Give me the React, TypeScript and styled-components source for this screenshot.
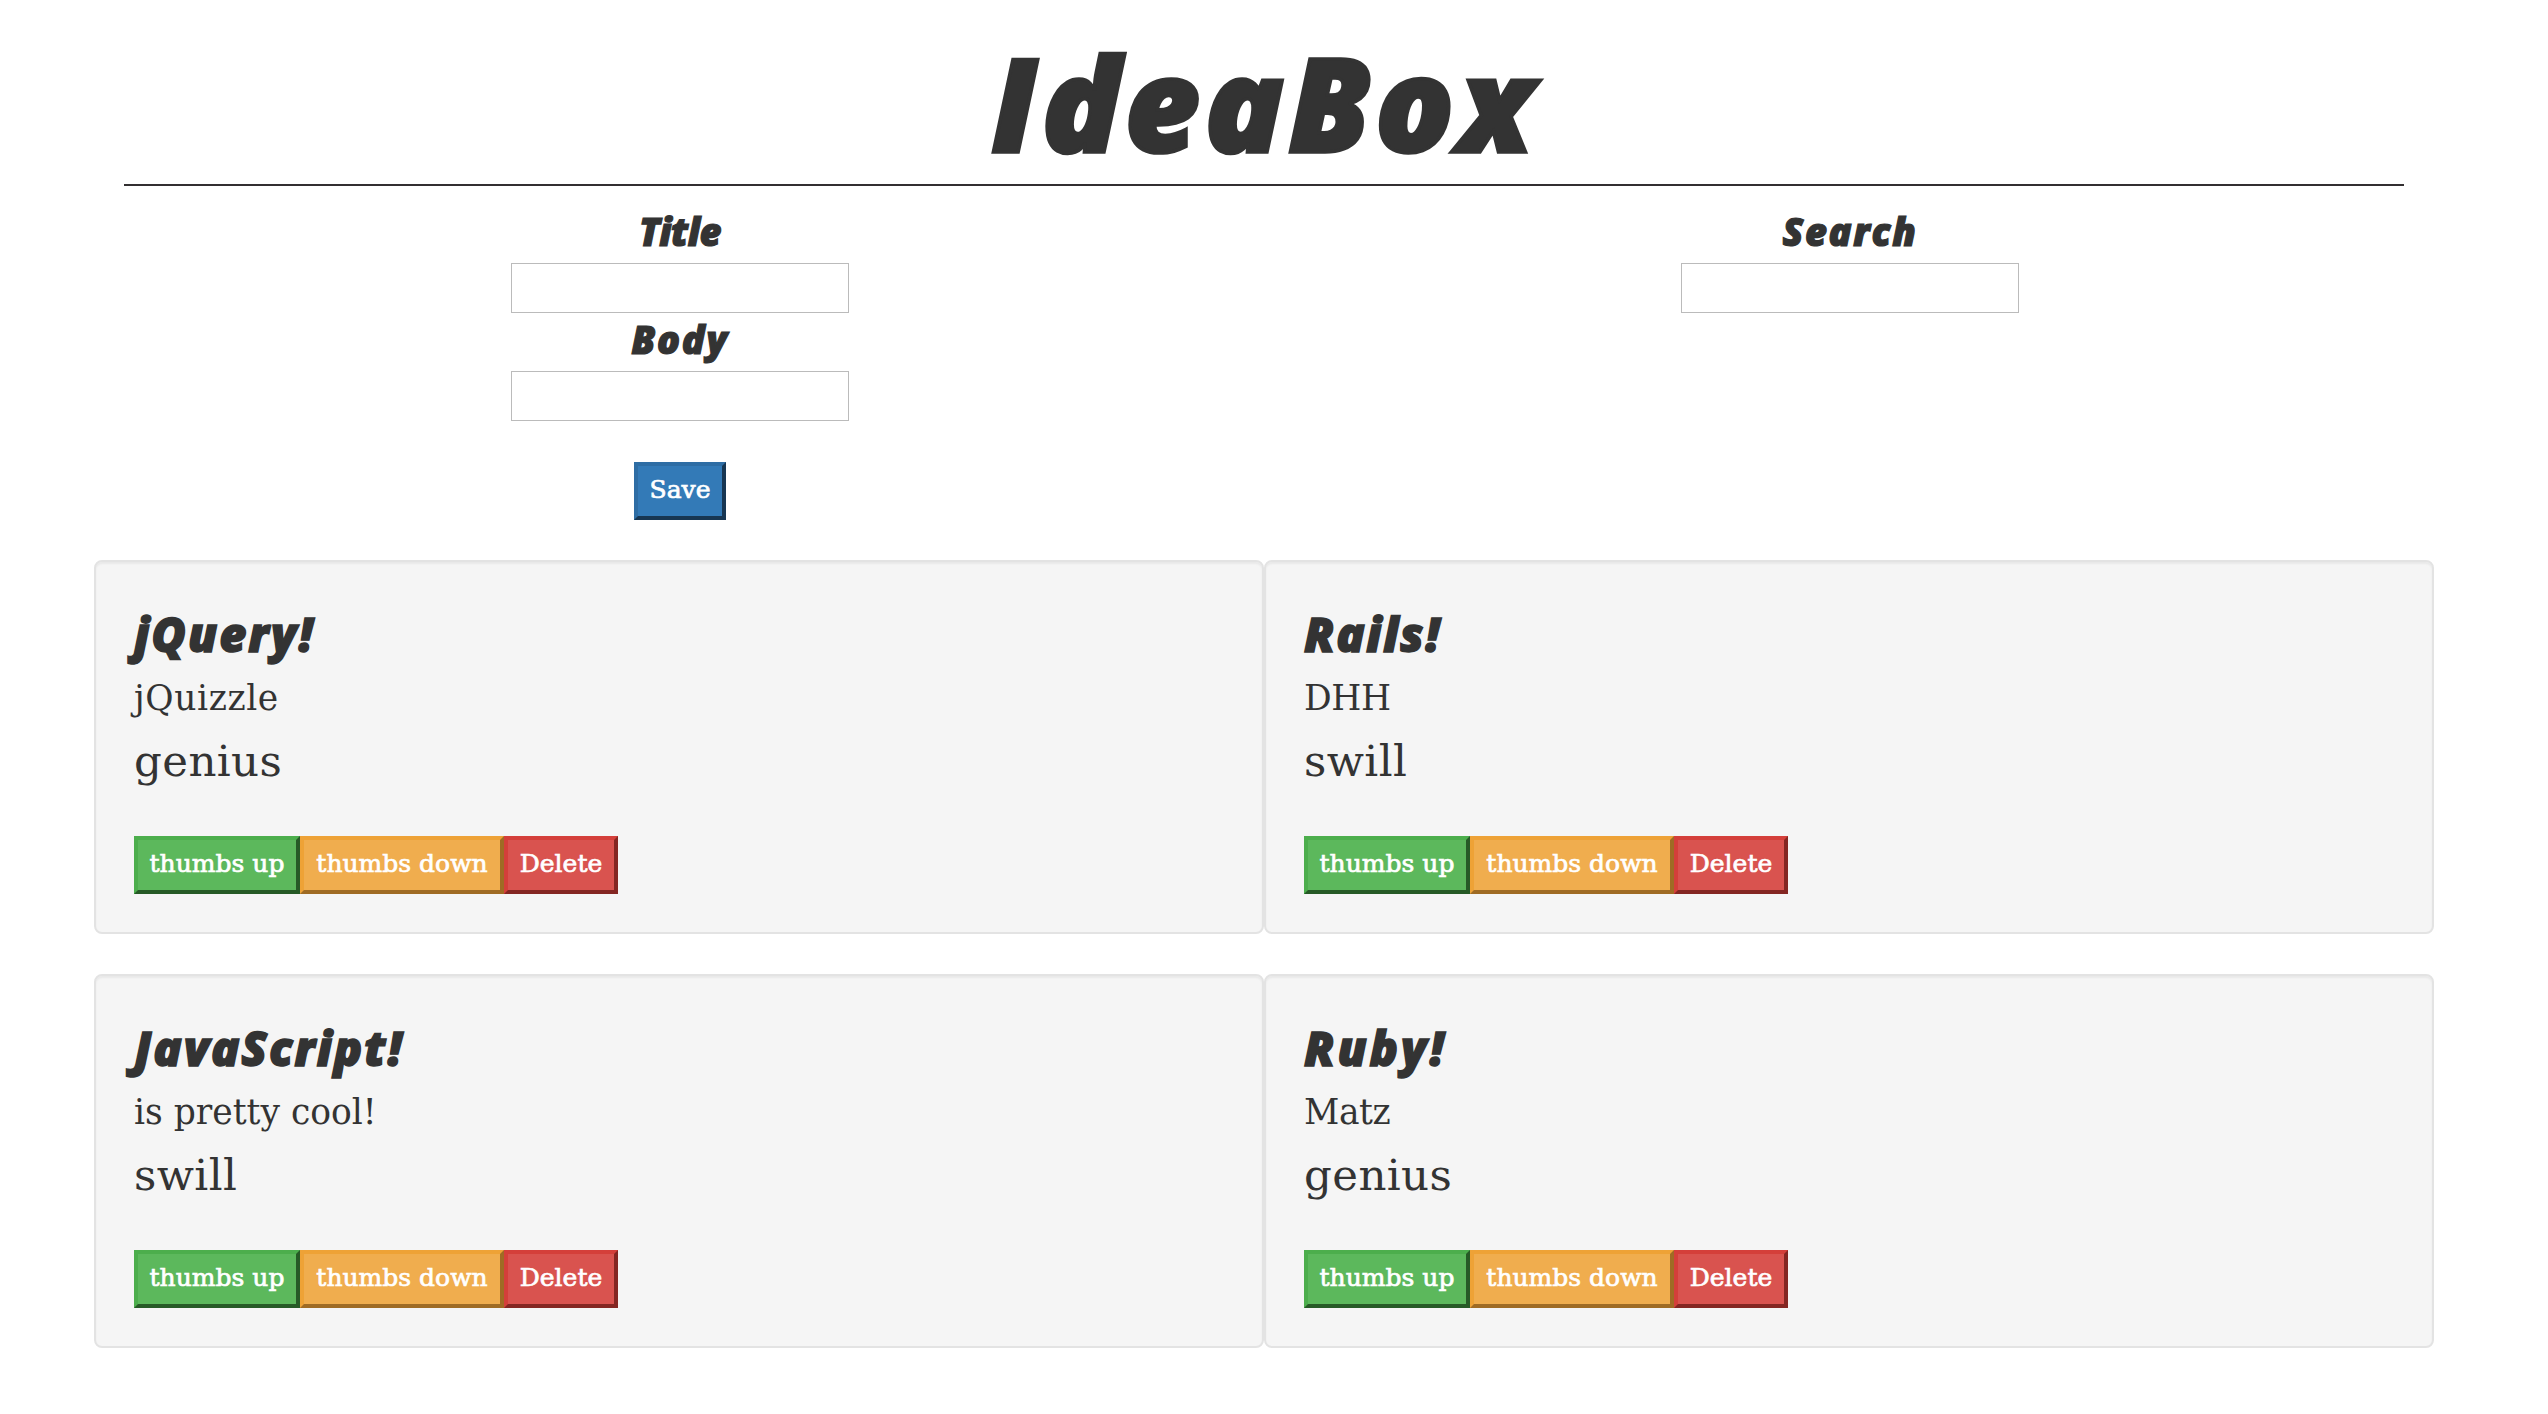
import React from 'react';
import styled, { createGlobalStyle } from 'styled-components';

const Global = createGlobalStyle`
  *, *::before, *::after { box-sizing: border-box; }
  body { margin: 0; background: #fff; color: #333; font-family: "DejaVu Serif", "Liberation Serif", serif; }
  h1, h2, h3, p { margin: 0; font-weight: 400; }
`;

const displayFont = `
  font-family: "Open Sans", "Noto Sans", sans-serif;
  font-style: italic;
  font-weight: 800;
  white-space: nowrap;
`;

const Page = styled.main`
  width: 2340px;
  margin-left: 94px;
`;

const Header = styled.header`
  margin: 0 30px;
  padding: 37px 0 17px;
  text-align: center;
  border-bottom: 2px solid #322f31;
`;

const Brand = styled.h1`
  ${displayFont}
  font-size: 130px;
  line-height: 130px;
  letter-spacing: 4.6px;
  -webkit-text-stroke: 3.5px #333;
`;

const Forms = styled.section`
  display: grid;
  grid-template-columns: 1fr 1fr;
  margin: 0 -1px 0 1px;
  padding: 25px 0 40px;
`;

const Column = styled.div`
  display: flex;
  flex-direction: column;
  align-items: center;
  gap: 6px;
`;

const Field = styled.label`
  display: flex;
  flex-direction: column;
  align-items: center;
  gap: 12px;
`;

const FieldName = styled.span<{ $spacing: number }>`
  ${displayFont}
  font-size: 38px;
  line-height: 40px;
  letter-spacing: ${p => p.$spacing}px;
  -webkit-text-stroke: 1.2px #333;
`;

const Input = styled.input`
  width: 338px;
  height: 50px;
  padding: 0 12px;
  border: 1px solid #bbb;
  border-radius: 0;
  background: #fff;
  font: inherit;
  font-size: 25px;
  outline: none;
`;

/* face, lit edge, shaded edge */
const tones = {
  primary: ['#337ab7', '#2e6da4', '#173652'],
  success: ['#5cb85c', '#4cae4c', '#265a26'],
  warning: ['#f0ad4e', '#eea236', '#9f6b24'],
  danger: ['#d9534f', '#d43f3a', '#842622'],
};
type Tone = keyof typeof tones;

const Button = styled.button<{ $tone: Tone; $width: number }>`
  width: ${p => p.$width}px;
  height: 58px;
  padding: 0 0 2px;
  border: 4px solid;
  border-color: ${p => {
    const [, lit, shaded] = tones[p.$tone];
    return `${lit} ${shaded} ${shaded} ${lit}`;
  }};
  border-radius: 0;
  background: ${p => tones[p.$tone][0]};
  color: #fff;
  font: 25px/48px "DejaVu Serif", "Liberation Serif", serif;
  white-space: nowrap;
  -webkit-text-stroke: 0.7px #fff;
`;

const SaveButton = styled(Button)`
  margin-top: 35px;
`;

const Grid = styled.section`
  display: grid;
  grid-template-columns: 1fr 1fr;
  row-gap: 40px;
`;

const Card = styled.article`
  padding: 47px 38px 38px;
  border: 2px solid #e3e3e3;
  border-radius: 8px;
  background: #f5f5f5;
  box-shadow: inset 0 2px 2px rgba(0, 0, 0, 0.05);
`;

const CardTitle = styled.h2<{ $spacing: number }>`
  ${displayFont}
  font-size: 47px;
  line-height: 50px;
  letter-spacing: ${p => p.$spacing}px;
  -webkit-text-stroke: 1.4px #333;
`;

const CardBody = styled.p<{ $spacing: number }>`
  margin-top: 19px;
  font-size: 34.5px;
  line-height: 40px;
  letter-spacing: ${p => p.$spacing}px;
`;

const Quality = styled.h3`
  margin-top: 18px;
  font-size: 43.5px;
  line-height: 50px;
  letter-spacing: 0.4px;
`;

const Actions = styled.div`
  display: flex;
  margin-top: 50px;
`;

const ideas = [
  { title: 'jQuery!', body: 'jQuizzle', quality: 'genius', titleSpacing: 2, bodySpacing: 0.6 },
  { title: 'Rails!', body: 'DHH', quality: 'swill', titleSpacing: 1.6, bodySpacing: -0.4 },
  { title: 'JavaScript!', body: 'is pretty cool!', quality: 'swill', titleSpacing: 1.8, bodySpacing: 0 },
  { title: 'Ruby!', body: 'Matz', quality: 'genius', titleSpacing: 2.9, bodySpacing: -0.4 },
];

export default function App() {
  return (
    <>
      <Global />
      <Page>
        <Header>
          <Brand>IdeaBox</Brand>
        </Header>
        <Forms>
          <Column>
            <Field>
              <FieldName $spacing={-0.6}>Title</FieldName>
              <Input />
            </Field>
            <Field>
              <FieldName $spacing={1.7}>Body</FieldName>
              <Input />
            </Field>
            <SaveButton $tone="primary" $width={92}>Save</SaveButton>
          </Column>
          <Column>
            <Field>
              <FieldName $spacing={1.6}>Search</FieldName>
              <Input />
            </Field>
          </Column>
        </Forms>
        <Grid>
          {ideas.map(idea => (
            <Card key={idea.title}>
              <CardTitle $spacing={idea.titleSpacing}>{idea.title}</CardTitle>
              <CardBody $spacing={idea.bodySpacing}>{idea.body}</CardBody>
              <Quality>{idea.quality}</Quality>
              <Actions>
                <Button $tone="success" $width={166}>thumbs up</Button>
                <Button $tone="warning" $width={204}>thumbs down</Button>
                <Button $tone="danger" $width={114}>Delete</Button>
              </Actions>
            </Card>
          ))}
        </Grid>
      </Page>
    </>
  );
}
